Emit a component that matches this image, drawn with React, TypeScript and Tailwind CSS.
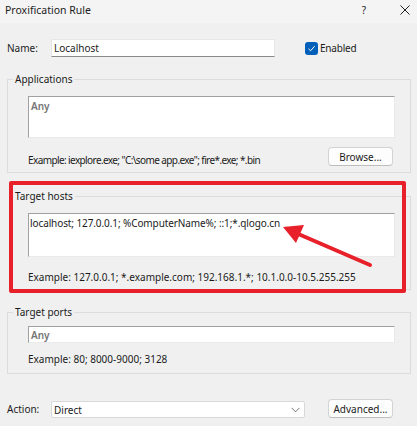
export default function App() {
  const box = "bg-white border border-[#eaeaea] border-t-[#a0a0a0] border-l-[#a0a0a0]";
  const btn =
    "flex items-center justify-center bg-[#fdfdfd] border border-[#d3d3d3] border-b-[#bdbdbd] rounded-[4px]";
  return (
    <div className="relative w-[417px] h-[426px] overflow-hidden bg-[#f0f0f0] text-[10px] leading-[16px] text-[#1b1b1b] whitespace-nowrap font-['Noto_Sans',sans-serif]">
      {/* title bar */}
      <div className="h-[23px] bg-[#f4f4f4] flex items-start pt-[2px] pl-[5px]">
        <span className="flex-1 text-[10.5px]">Proxification Rule</span>
        <span className="w-[6px] mr-[33px] text-center">?</span>
        <svg width="10" height="10" viewBox="0 0 10 10" className="mt-[3px] mr-[7px]">
          <path d="M0.5 0.5 L9.5 9.5 M9.5 0.5 L0.5 9.5" stroke="#222" strokeWidth="1" />
        </svg>
      </div>

      <div className="px-[7px]">
        {/* Name row */}
        <div className="mt-[16px] h-[18px] flex items-center">
          <span className="w-[44px]">Name:</span>
          <div className="w-[224px] h-[18px] bg-white border border-[#e6e6e6] border-b-[#8a8a8a] flex items-center pl-[2px]">
            Localhost
          </div>
          <div className="ml-[30px] w-[13px] h-[13px] rounded-[3px] bg-[#005fb8] flex items-center justify-center">
            <svg width="9" height="9" viewBox="0 0 9 9">
              <path d="M1.5 4.8 L3.6 6.8 L7.6 2.2" fill="none" stroke="white" strokeWidth="1" />
            </svg>
          </div>
          <span className="ml-[2px] tracking-[-0.2px]">Enabled</span>
        </div>

        {/* Applications */}
        <fieldset className="mt-[14px] w-[404px] border border-[#dcdcdc] pb-[6px]">
          <legend className="ml-[5px] px-[2px]">Applications</legend>
          <div className={`mt-[9px] ml-[20px] w-[367px] h-[42px] ${box} pl-[2px] pt-[1px] text-[#747474] font-semibold`}>
            Any
          </div>
          <div className="mt-[9px] h-[19px] flex items-start">
            <span className="ml-[20px] pt-[5px] tracking-[-0.6px]">Example: iexplore.exe; "C:\some app.exe"; fire*.exe; *.bin</span>
            <div className={`ml-auto mr-[17px] w-[65px] h-[19px] ${btn}`}>Browse...</div>
          </div>
        </fieldset>

        {/* Target hosts */}
        <fieldset className="mt-[15px] ml-[3px] w-[401px] border border-[#dcdcdc] pb-[4px]">
          <legend className="ml-[2px] px-[2px]">Target hosts</legend>
          <div className={`mt-[9px] ml-[17px] w-[367px] h-[44px] ${box} pl-[1px] pt-[1px] tracking-[-0.1px]`}>
            localhost; 127.0.0.1; %ComputerName%; ::1;*.qlogo.cn
          </div>
          <div className="mt-[12px] h-[16px] ml-[17px]">
            Example: 127.0.0.1; *.example.com; 192.168.1.*; 10.1.0.0-10.5.255.255
          </div>
        </fieldset>

        {/* Target ports */}
        <fieldset className="mt-[14px] w-[404px] border border-[#dcdcdc] pb-[6px]">
          <legend className="ml-[5px] px-[2px]">Target ports</legend>
          <div className={`mt-[6px] ml-[20px] w-[367px] h-[17px] ${box} pl-[2px] flex items-center text-[#747474] font-semibold`}>
            Any
          </div>
          <div className="mt-[8px] h-[16px] ml-[20px]">Example: 80; 8000-9000; 3128</div>
        </fieldset>

        {/* Action row */}
        <div className="mt-[25px] h-[19px] flex items-end">
          <span className="w-[44px] self-center">Action:</span>
          <div className="w-[254px] h-[17px] bg-white border border-[#d9d9d9] rounded-[2px] flex items-center pl-[2px]">
            <span className="flex-1">Direct</span>
            <svg width="9" height="6" viewBox="0 0 9 6" className="mr-[4px]">
              <path d="M0.5 0.8 L4.5 4.8 L8.5 0.8" fill="none" stroke="#777" strokeWidth="1" />
            </svg>
          </div>
          <div className={`ml-[23px] w-[65px] h-[19px] ${btn}`}>Advanced...</div>
        </div>
      </div>

      {/* annotation overlays */}
      <div className="absolute left-[9px] top-[181px] w-[397px] h-[112px] border-[4px] border-[#e8202a] rounded-[2px] pointer-events-none" />
      <svg className="absolute left-0 top-0 pointer-events-none" width="417" height="426" viewBox="0 0 417 426">
        <line x1="370" y1="265" x2="296" y2="233" stroke="#e8202a" strokeWidth="4" strokeLinecap="round" />
        <polygon points="283,227 304,225 296,243" fill="#e8202a" />
      </svg>
    </div>
  );
}
